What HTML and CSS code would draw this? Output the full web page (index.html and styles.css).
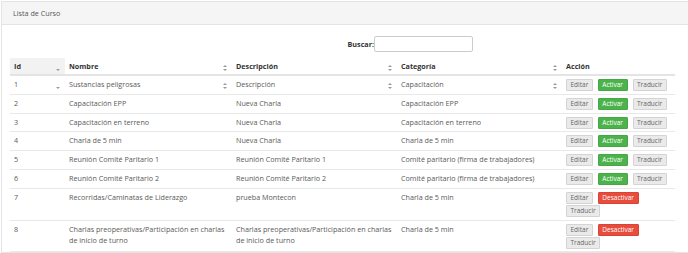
FILE: index.html
```html
<!DOCTYPE html>
<html lang="es">
<head>
    <meta charset="UTF-8">
    <title>Lista de Curso</title>
    <link rel="stylesheet" href="styles.css">
</head>
<body>

    <!-- Panel principal -->
    <div class="panel">
        <div class="panel-heading">Lista de Curso</div>
        <div class="panel-body">

            <div class="search">
                <label>Buscar:</label><input type="text">
            </div>

            <table class="tabla">
                <thead>
                    <tr>
                        <th class="c-id sorted">Id <span class="sort sort-desc"></span></th>
                        <th class="c-nombre">Nombre <span class="sort"></span></th>
                        <th class="c-desc">Descripción <span class="sort"></span></th>
                        <th class="c-cat">Categoría <span class="sort"></span></th>
                        <th class="c-acc">Acción</th>
                    </tr>
                </thead>
                <tbody>
                    <tr>
                        <td>1 <span class="sort sort-desc"></span></td>
                        <td>Sustancias peligrosas <span class="sort"></span></td>
                        <td>Descripción <span class="sort"></span></td>
                        <td>Capacitación <span class="sort"></span></td>
                        <td><div class="acc"><button class="btn">Editar</button><button class="btn btn-success">Activar</button><button class="btn">Traducir</button></div></td>
                    </tr>
                    <tr>
                        <td>2</td>
                        <td>Capacitación EPP</td>
                        <td>Nueva Charla</td>
                        <td>Capacitación EPP</td>
                        <td><div class="acc"><button class="btn">Editar</button><button class="btn btn-success">Activar</button><button class="btn">Traducir</button></div></td>
                    </tr>
                    <tr>
                        <td>3</td>
                        <td>Capacitación en terreno</td>
                        <td>Nueva Charla</td>
                        <td>Capacitación en terreno</td>
                        <td><div class="acc"><button class="btn">Editar</button><button class="btn btn-success">Activar</button><button class="btn">Traducir</button></div></td>
                    </tr>
                    <tr>
                        <td>4</td>
                        <td>Charla de 5 min</td>
                        <td>Nueva Charla</td>
                        <td>Charla de 5 min</td>
                        <td><div class="acc"><button class="btn">Editar</button><button class="btn btn-success">Activar</button><button class="btn">Traducir</button></div></td>
                    </tr>
                    <tr>
                        <td>5</td>
                        <td>Reunión Comité Paritario 1</td>
                        <td>Reunión Comité Paritario 1</td>
                        <td>Comité paritario (firma de trabajadores)</td>
                        <td><div class="acc"><button class="btn">Editar</button><button class="btn btn-success">Activar</button><button class="btn">Traducir</button></div></td>
                    </tr>
                    <tr>
                        <td>6</td>
                        <td>Reunión Comité Paritario 2</td>
                        <td>Reunión Comité Paritario 2</td>
                        <td>Comité paritario (firma de trabajadores)</td>
                        <td><div class="acc"><button class="btn">Editar</button><button class="btn btn-success">Activar</button><button class="btn">Traducir</button></div></td>
                    </tr>
                    <tr>
                        <td>7</td>
                        <td>Recorridas/Caminatas de Liderazgo</td>
                        <td>prueba Montecon</td>
                        <td>Charla de 5 min</td>
                        <td><div class="acc"><button class="btn">Editar</button><button class="btn btn-danger">Desactivar</button><button class="btn">Traducir</button></div></td>
                    </tr>
                    <tr>
                        <td>8</td>
                        <td>Charlas preoperativas/Participación en charlas de inicio de turno</td>
                        <td>Charlas preoperativas/Participación en charlas de inicio de turno</td>
                        <td>Charla de 5 min</td>
                        <td><div class="acc"><button class="btn">Editar</button><button class="btn btn-danger">Desactivar</button><button class="btn">Traducir</button></div></td>
                    </tr>
                </tbody>
            </table>

        </div>
    </div>

</body>
</html>
```

FILE: styles.css
```css
/* General */
body {
    margin: 0;
    background-color: #fff;
    font-family: "Open Sans", "Liberation Sans", sans-serif;
    font-size: 7.2px;
    color: #5a5a5a;
    overflow: hidden;
}

.panel {
    margin: 1px 0 0 1px;
    border: 1px solid #e4e4e4;
    border-right: none;
    background-color: #fff;
}

.panel-heading {
    background-color: #f5f5f5;
    border-bottom: 1px solid #e4e4e4;
    padding: 7px 11px 6px;
    height: 9px;
    line-height: 9px;
    color: #555;
}

.panel-body {
    padding: 10px 12px 0 8px;
}

/* Buscador */
.search {
    display: flex;
    justify-content: flex-end;
    align-items: center;
    padding-right: 203px;
    height: 17px;
    margin-bottom: 6px;
}

.search label {
    font-weight: bold;
    color: #333;
}

.search input {
    width: 93px;
    height: 14px;
    padding: 0 2px;
    border: 1px solid #ccc;
    border-radius: 2px;
    margin: 0;
}

/* Tabla */
.tabla {
    width: 665px;
    border-collapse: collapse;
    table-layout: fixed;
}

.tabla th,
.tabla td {
    text-align: left;
    padding: 3px 5px 2.8px 4px;
    line-height: 12px;
    vertical-align: top;
    border-bottom: 1px solid #e8e8e8;
    position: relative;
}

.tabla td {
    line-height: 11.5px;
}

.tabla th {
    color: #333;
    font-weight: bold;
    border-bottom: 2px solid #e4e4e4;
    padding-top: 2px;
    padding-bottom: 2px;
}

.tabla th.sorted {
    background-color: #f2f2f2;
}

.c-id { width: 46px; }
.c-nombre { width: 158px; }
.c-desc { width: 156px; }
.c-cat { width: 156px; }

/* Icono de orden */
.sort {
    position: absolute;
    right: 6px;
    top: 7px;
    width: 3px;
    height: 6px;
}

.sort::before,
.sort::after {
    content: "";
    position: absolute;
    left: 0;
    border-left: 2px solid transparent;
    border-right: 2px solid transparent;
}

.sort::before {
    top: 0;
    border-bottom: 2px solid #999;
}

.sort::after {
    bottom: 0;
    border-top: 2px solid #999;
}

.sort-desc::before {
    display: none;
}

/* Botones */
.acc {
    display: flex;
    flex-wrap: wrap;
    gap: 1px 5px;
}

.btn {
    height: 12px;
    line-height: 10px;
    padding: 0 3.5px;
    margin: 0;
    font-family: inherit;
    font-size: 6.5px;
    color: #666;
    background-color: #eaeaea;
    border: 1px solid #d4d4d4;
    border-radius: 1px;
}

.btn-success {
    color: #fff;
    background-color: #4cb34c;
    border-color: #45a845;
}

.btn-danger {
    color: #fff;
    background-color: #e74c3c;
    border-color: #d9443a;
}
```
